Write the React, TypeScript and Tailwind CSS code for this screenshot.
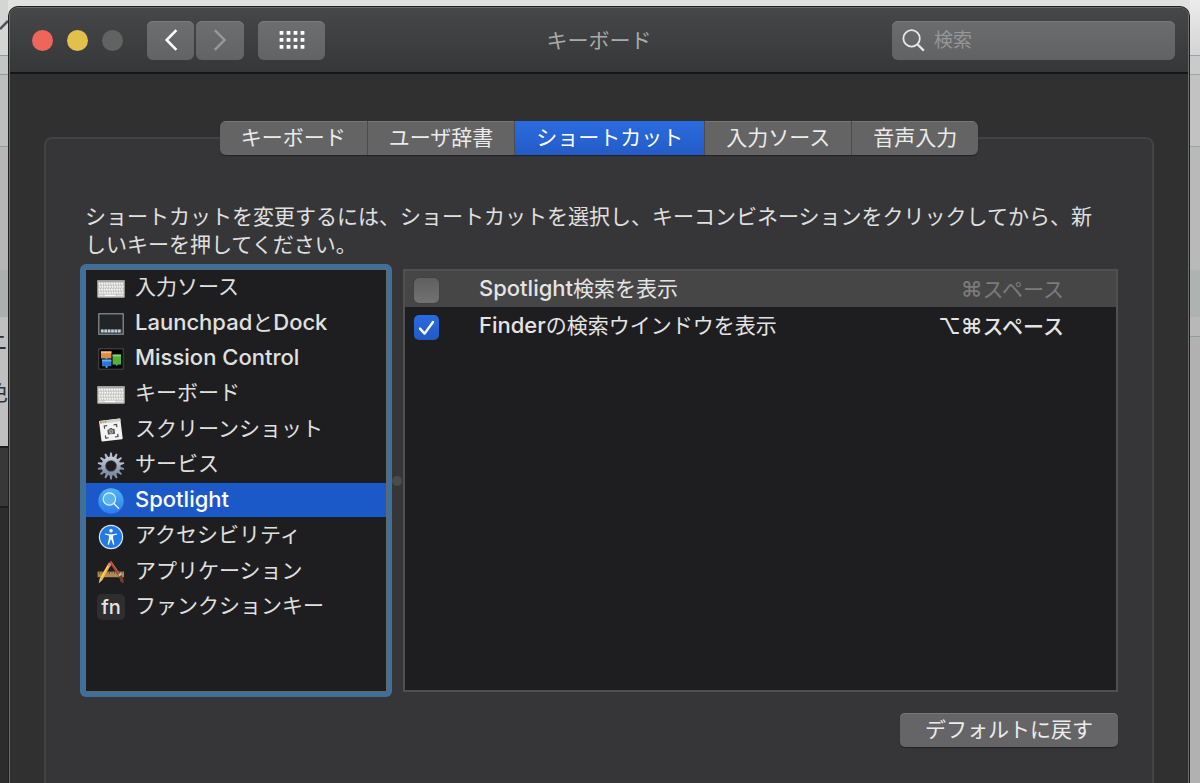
import React, { useState } from "react";

const tabs = ["キーボード", "ユーザ辞書", "ショートカット", "入力ソース", "音声入力"];

// Latin letters and key symbols are set one size larger so they balance with the kana beside them.
function MixedText({ text }: { text: string }) {
  return (
    <>
      {text.split(/([A-Za-z ⌘⌥]+)/).map((part, i) =>
        i % 2 === 1 ? (
          <span key={i} className="text-[22px] font-medium">{part}</span>
        ) : (
          part
        )
      )}
    </>
  );
}

function KeyboardIcon() {
  const keys: React.ReactNode[] = [];
  for (let row = 0; row < 4; row++) {
    for (let col = 0; col < 10; col++) {
      keys.push(
        <rect key={`${row}-${col}`} x={1.6 + col * 2.5 + (row % 2) * 0.5} y={2.6 + row * 3} width="1.8" height="2.1" rx="0.4" fill="#f6f6f6" />
      );
    }
  }
  return (
    <svg viewBox="0 0 28 18" className="h-[18px] w-7">
      <rect x="0.3" y="0.3" width="27.4" height="17.4" rx="0.8" fill="#bdbdbb" />
      <rect x="0.3" y="0.3" width="27.4" height="1.6" fill="#a3a3a1" />
      {keys}
      <rect x="1.6" y="14.6" width="5" height="1.5" fill="#e6e6e4" />
      <rect x="7.4" y="14.6" width="11.5" height="1.5" fill="#fafafa" />
      <rect x="19.7" y="14.6" width="6.6" height="1.5" fill="#e6e6e4" />
    </svg>
  );
}

function LaunchpadIcon() {
  return (
    <svg viewBox="0 0 26 22" className="h-[22px] w-[26px]">
      <rect x="0.8" y="0.8" width="24.4" height="20.4" fill="#232425" stroke="#8d9699" strokeWidth="1.2" />
      <rect x="2.4" y="16.2" width="21.2" height="3.8" fill="#4a5864" />
      {[3, 6.4, 9.8, 13.2, 16.6, 20].map((x) => (
        <rect key={x} x={x} y="16.6" width="2.6" height="2.8" fill="#c3cfdb" />
      ))}
    </svg>
  );
}

function MissionIcon() {
  return (
    <svg viewBox="0 0 26 22" className="h-[22px] w-[26px]">
      <rect x="0.8" y="0.8" width="24.4" height="20.4" fill="#050505" stroke="#4a4b4c" strokeWidth="1" />
      <rect x="3" y="3.4" width="10.4" height="7" fill="#e88a3a" />
      <rect x="3" y="3.4" width="10.4" height="1.8" fill="#f6b98a" />
      <rect x="4" y="11.6" width="9.4" height="6.6" fill="#2f74dd" />
      <rect x="4" y="11.6" width="9.4" height="1.8" fill="#69b3f3" />
      <rect x="14.6" y="6.6" width="8.4" height="10" fill="#52b339" />
      <rect x="14.6" y="6.6" width="8.4" height="1.8" fill="#86d56e" />
      <circle cx="8.4" cy="10.2" r="1" fill="#41b6d8" />
      <circle cx="8.6" cy="18.8" r="1.2" fill="#41a6e8" />
      <circle cx="18.8" cy="16.8" r="1" fill="#41a6c8" />
    </svg>
  );
}

function ScreenshotIcon() {
  return (
    <svg viewBox="0 0 26 24" className="h-6 w-[26px]">
      <g transform="rotate(-7 13 12)">
        <rect x="2.2" y="1.6" width="21.4" height="20.8" rx="0.8" fill="#f3f3f2" />
        <rect x="2.2" y="1.6" width="21.4" height="3" fill="#cfcfcd" />
        <circle cx="3.8" cy="3.1" r="0.9" fill="#ee5f57" />
        <circle cx="6.2" cy="3.1" r="0.9" fill="#e8a93c" />
        <circle cx="8.6" cy="3.1" r="0.9" fill="#52b84a" />
        <path d="M6.8 10V7.2H9.8M16.2 7.2H19.2V10M19.2 16.6V19.4H16.2M9.8 19.4H6.8V16.6" fill="none" stroke="#4b4b4b" strokeWidth="1.2" />
        <path d="M9.4 11.2H11.2L12 10H14L14.8 11.2H16.6V16.2H9.4Z" fill="#555" />
        <circle cx="13" cy="13.6" r="1.7" fill="#777" stroke="#ddd" strokeWidth="0.6" />
      </g>
    </svg>
  );
}

function GearIcon() {
  return (
    <svg viewBox="0 0 28 28" className="h-7 w-7">
      <defs>
        <linearGradient id="gear" x1="0" y1="0" x2="0" y2="1">
          <stop offset="0" stopColor="#c0c8d6" />
          <stop offset="1" stopColor="#7f8ca4" />
        </linearGradient>
      </defs>
      {Array.from({ length: 14 }, (_, i) => (
        <path key={i} d="M12.5 5.4L13.2 0.6H14.8L15.5 5.4Z" fill={i > 3 && i < 11 ? "#8591a8" : "#b4bccb"} transform={`rotate(${(i * 360) / 14} 14 14)`} />
      ))}
      <circle cx="14" cy="14" r="7.6" fill="none" stroke="url(#gear)" strokeWidth="4" />
      <circle cx="14" cy="14" r="5.5" fill="none" stroke="#5b6578" strokeWidth="0.6" />
    </svg>
  );
}

function SpotlightIcon() {
  return (
    <svg viewBox="0 0 26 26" className="h-[26px] w-[26px]">
      <defs>
        <linearGradient id="spot" x1="0" y1="0" x2="0" y2="1">
          <stop offset="0" stopColor="#4db5f5" />
          <stop offset="1" stopColor="#2e7bf2" />
        </linearGradient>
      </defs>
      <circle cx="13" cy="13" r="12.7" fill="url(#spot)" />
      <circle cx="11.4" cy="11" r="6.2" fill="#5db4f5" stroke="#e8f3fd" strokeWidth="1.2" />
      <path d="M15.9 15.5L20.6 20.2" stroke="#e8f3fd" strokeWidth="1.4" strokeLinecap="round" />
    </svg>
  );
}

function AccessibilityIcon() {
  return (
    <svg viewBox="0 0 26 26" className="h-[26px] w-[26px]">
      <circle cx="13" cy="13" r="12.2" fill="#d9e8f6" />
      <circle cx="13" cy="13" r="11" fill="#2179e4" />
      <circle cx="13" cy="6.8" r="1.8" fill="#fff" />
      <path d="M7 9.4L11.4 10.3H14.6L19 9.4L19.2 10.5L15.1 11.6V14.6L16.4 20.4L15.2 20.7L13.3 15.6H12.7L10.8 20.7L9.6 20.4L10.9 14.6V11.6L6.8 10.5Z" fill="#fff" />
    </svg>
  );
}

function ApplicationsIcon() {
  return (
    <svg viewBox="0 0 28 24" className="h-6 w-7">
      <rect x="0.6" y="11.6" width="26.4" height="5.6" fill="#b08a52" />
      <path d="M2.5 11.6V14M5 11.6V13.4M7.5 11.6V14M10 11.6V13.4M12.5 11.6V14M15 11.6V13.4M17.5 11.6V14M20 11.6V13.4M22.5 11.6V14M25 11.6V13.4" stroke="#644824" strokeWidth="0.7" />
      <path d="M13.2 1.6L25 19" stroke="#9c452b" strokeWidth="2.6" />
      <path d="M14 1.6L22.4 13.8" stroke="#cb7a58" strokeWidth="0.8" />
      <path d="M21.6 15L24 13.4L26.8 20.6L26.2 23.4L23.4 21.4Z" fill="#6d412d" />
      <path d="M21.2 14.6L23.8 12.8L24.8 14.8L22.3 16.6Z" fill="#b9bcc0" />
      <path d="M11.8 5.6L4 19.4" stroke="#f0b93b" strokeWidth="3" />
      <path d="M11.2 5.4L3.4 19" stroke="#f9dc7c" strokeWidth="0.9" />
      <path d="M10.4 5.2L11.8 2.6L14.4 4L13.2 6.7Z" fill="#e8838c" />
      <path d="M2.7 18.6L5.3 20.1L1.8 23.2Z" fill="#ead3a8" />
    </svg>
  );
}

function FnIcon() {
  return (
    <span className="flex h-[26px] w-7 items-center justify-center rounded-[5px] bg-[#2e2e30] pb-px text-[20px] leading-none font-medium text-[#e4e4e4]">fn</span>
  );
}

const categories = [
  { label: "入力ソース", icon: <KeyboardIcon /> },
  { label: "LaunchpadとDock", icon: <LaunchpadIcon /> },
  { label: "Mission Control", icon: <MissionIcon /> },
  { label: "キーボード", icon: <KeyboardIcon /> },
  { label: "スクリーンショット", icon: <ScreenshotIcon /> },
  { label: "サービス", icon: <GearIcon /> },
  { label: "Spotlight", icon: <SpotlightIcon /> },
  { label: "アクセシビリティ", icon: <AccessibilityIcon /> },
  { label: "アプリケーション", icon: <ApplicationsIcon /> },
  { label: "ファンクションキー", icon: <FnIcon /> },
];

const toolbarButton =
  "flex h-[39px] items-center justify-center rounded-md bg-gradient-to-b from-[#6d6e70] to-[#626364] shadow-[inset_0_1px_0_#7a7b7c]";

function TitleBar() {
  return (
    <header className="grid h-[66px] grid-cols-[1fr_auto_1fr] items-center border-b-2 border-[#161617] bg-gradient-to-b from-[#464748] to-[#363738] px-[13px]">
      <div className="flex items-center pl-[9px]">
        <div className="flex gap-[14px]">
          <button aria-label="閉じる" className="size-[21px] rounded-full bg-[#f0655a]" />
          <button aria-label="しまう" className="size-[21px] rounded-full bg-[#e2c04c]" />
          <button aria-label="拡大" className="size-[21px] rounded-full bg-[#616362]" />
        </div>
        <div className="ml-6 flex gap-[2px]">
          <button aria-label="戻る" className={`${toolbarButton} w-[47px]`}>
            <svg viewBox="0 0 14 22" className="h-[22px] w-[14px]">
              <path d="M12.4 1.2L2.6 11L12.4 20.8" fill="none" stroke="#fff" strokeWidth="2.6" />
            </svg>
          </button>
          <button aria-label="進む" className={`${toolbarButton} w-12`}>
            <svg viewBox="0 0 14 22" className="h-[22px] w-[14px]">
              <path d="M1.8 1.2L11.6 11L1.8 20.8" fill="none" stroke="#979899" strokeWidth="2.4" />
            </svg>
          </button>
        </div>
        <button aria-label="すべてを表示" className={`${toolbarButton} ml-[14px] w-[67px]`}>
          <svg viewBox="0 0 26 18" className="h-[18px] w-[26px]">
            {[0, 7, 14].map((y) =>
              [0, 7, 14, 21].map((x) => <rect key={`${x}-${y}`} x={x + 0.6} y={y} width="3.8" height="3.8" rx="0.5" fill="#fff" />)
            )}
          </svg>
        </button>
      </div>
      <h1 className="pt-[2px] text-[21px] leading-7 text-[#a9aaaa]">キーボード</h1>
      <label className="flex h-[39px] w-[283px] items-center gap-2 justify-self-end rounded-md bg-gradient-to-b from-[#6b6c6e] to-[#616263] pl-[10px] shadow-[inset_0_1px_0_#77787a]">
        <svg viewBox="0 0 24 24" className="size-6 shrink-0">
          <circle cx="9.6" cy="10.4" r="8.2" fill="none" stroke="#e8e8e8" strokeWidth="1.8" />
          <path d="M15.4 16.2L21.8 22.6" stroke="#e8e8e8" strokeWidth="2.2" />
        </svg>
        <input aria-label="検索" placeholder="検索" className="min-w-0 flex-1 bg-transparent pt-[2px] text-[19px] leading-7 text-white outline-none placeholder:text-[#959697]" />
      </label>
    </header>
  );
}

function CheckBox({ id, checked, onChange }: { id: string; checked: boolean; onChange: () => void }) {
  return (
    <span className="grid size-[25px] shrink-0">
      <input
        id={id}
        type="checkbox"
        checked={checked}
        onChange={onChange}
        className="col-start-1 row-start-1 size-[25px] appearance-none rounded-[5px] bg-gradient-to-b from-[#5f5f5f] to-[#727272] shadow-[0_0_1px_#222] checked:from-[#2a6be0] checked:to-[#2459c4]"
      />
      {checked && (
        <svg viewBox="0 0 25 25" className="pointer-events-none col-start-1 row-start-1 size-[25px]">
          <path d="M6 13.6L10.6 18.6L19 7" fill="none" stroke="#fff" strokeWidth="2.4" strokeLinecap="round" strokeLinejoin="round" />
        </svg>
      )}
    </span>
  );
}

function ShortcutPane() {
  const [category, setCategory] = useState("Spotlight");
  const [enabled, setEnabled] = useState([false, true]);
  const toggle = (i: number) => setEnabled(enabled.map((v, n) => (n === i ? !v : v)));
  const rows = [
    { name: "Spotlight検索を表示", keys: "⌘スペース" },
    { name: "Finderの検索ウインドウを表示", keys: "⌥⌘スペース" },
  ];
  return (
    <section className="-mt-[18px] flex-1 rounded-t-lg border-2 border-b-0 border-[#434345] bg-[#363638] px-[34px] pt-16">
      <p className="pl-[5px] text-[21px] leading-7 text-[#e0e0e0]">
        ショートカットを変更するには、ショートカットを選択し、キーコンビネーションをクリックしてから、新
        <br />
        しいキーを押してください。
      </p>
      <div className="mt-[5px] flex items-center">
        <div className="w-[312px] shrink-0 rounded-md bg-[#406f9a] p-[5px]">
          <div className="min-h-[423px] border border-[#66696c] bg-[#1e1e20]">
            <ul className="flex h-[353px] flex-col justify-between">
              {categories.map(({ label, icon }) => (
                <li key={label}>
                  <button
                    onClick={() => setCategory(label)}
                    className={`flex h-[34px] w-full items-center gap-[10px] pl-[11px] text-left text-[21px] leading-7 ${
                      category === label ? "bg-[#1a59c7] text-white" : "text-[#e0e0e0]"
                    }`}
                  >
                    <span className="flex h-full w-7 shrink-0 items-center justify-center pt-[3px]">{icon}</span>
                    <span>
                      <MixedText text={label} />
                    </span>
                  </button>
                </li>
              ))}
            </ul>
          </div>
        </div>
        <div className="flex w-[11px] shrink-0">
          <span className="size-[10px] shrink-0 rounded-full bg-[#4b4b4d]" />
        </div>
        <div className="min-h-[423px] flex-1 border-2 border-[#505052] bg-[#1e1e20]">
          <table className="w-full text-[21px] leading-7 text-[#e4e4e4]">
            <tbody>
              {rows.map((row, i) => (
                <tr key={row.name} className={i === 0 ? "h-9 bg-[#464647]" : "h-[38px]"}>
                  <td className="w-[74px] pt-[3px] pl-[9px]">
                    <CheckBox id={`shortcut-${i}`} checked={enabled[i]} onChange={() => toggle(i)} />
                  </td>
                  <td className="pb-[2px]">
                    <label htmlFor={`shortcut-${i}`}>
                      <MixedText text={row.name} />
                    </label>
                  </td>
                  <td className={`pt-px pr-[52px] text-right ${enabled[i] ? "font-medium" : "text-[#7b7b7c]"}`}>
                    <MixedText text={row.keys} />
                  </td>
                </tr>
              ))}
            </tbody>
          </table>
        </div>
      </div>
      <div className="mt-4 flex justify-end">
        <button className="flex h-[34px] items-center rounded-[5px] bg-[#656567] px-[25px] text-[21px] leading-7 text-[#ececec] shadow-[inset_0_1px_0_#777779,0_1px_1px_#222]">
          デフォルトに戻す
        </button>
      </div>
    </section>
  );
}

export default function App() {
  const [tab, setTab] = useState("ショートカット");
  return (
    <div className="flex h-screen overflow-hidden bg-[#dfe2df] font-['Inter','Noto_Sans_CJK_JP',sans-serif]">
      <div className="flex w-2 shrink-0 flex-col items-end overflow-hidden bg-[#d4d6d4] text-[22px] leading-[50px] text-[#2d323c]">
        <svg viewBox="0 0 8 55" className="h-[55px] w-2">
          <path d="M0 29L8 21" stroke="#4e545a" strokeWidth="2.5" />
        </svg>
        <div className="h-5 w-full border-y border-[#8f9ca0] bg-[#c4c5c5]" />
        <div className="h-[72px] w-full border-b border-[#8f9ca0] bg-[#bdbebe]" />
        <div className="h-[123px] w-full bg-[#b6b6b6]" />
        <div className="h-[47px] w-full bg-[#abb0ae]" />
        <div className="flex h-[129px] w-full flex-col items-end bg-[#bfbfbf]">
          <span>ニ</span>
          <span>色</span>
        </div>
        <div className="h-[62px] w-full border-y-2 border-[#1d1d1d] bg-[#373837]" />
        <div className="w-full flex-1 bg-[#2b2c2b]" />
      </div>
      <div className="flex min-w-0 flex-1 flex-col pt-[6px]">
        <main className="flex flex-1 flex-col rounded-t-[10px] border border-b-0 border-[#1f2020] bg-[#303031]">
          <div className="flex flex-1 flex-col overflow-hidden rounded-t-[9px] border border-b-0 border-[#6a6b6b]">
            <TitleBar />
            <div className="flex flex-1 flex-col px-[34px] pt-[47px]">
              <div role="tablist" className="z-10 flex h-[34px] self-center overflow-hidden rounded-md shadow-[0_1px_1px_#222]">
                {tabs.map((name) => (
                  <button
                    key={name}
                    role="tab"
                    aria-selected={tab === name}
                    onClick={() => setTab(name)}
                    className={`border-r border-[#4c4c4d] px-[21px] text-[21px] leading-7 last:border-r-0 ${
                      tab === name
                        ? "bg-gradient-to-b from-[#2a6ce0] to-[#245bc6] text-white"
                        : "bg-[#646465] text-[#ebebeb] shadow-[inset_0_1px_0_#767677]"
                    }`}
                  >
                    {name}
                  </button>
                ))}
              </div>
              <ShortcutPane />
            </div>
          </div>
        </main>
      </div>
      <div className="flex w-[10px] shrink-0 flex-col bg-[#b0b1b0]">
        <div className="h-[55px] bg-gradient-to-b from-[#ececec] to-[#d4d4d4]" />
        <div className="h-5 border-y border-[#9aa5a9] bg-[#c9caca]" />
        <div className="h-[72px] border-b border-[#9aa5a9] bg-[#c2c2c2]" />
        <div className="h-[123px] bg-[#b9b9b9]" />
        <div className="h-[47px] bg-[#aeb2b0]" />
        <div className="h-5 border-b border-[#8f9ca0] bg-[#b8b8b8]" />
      </div>
    </div>
  );
}
